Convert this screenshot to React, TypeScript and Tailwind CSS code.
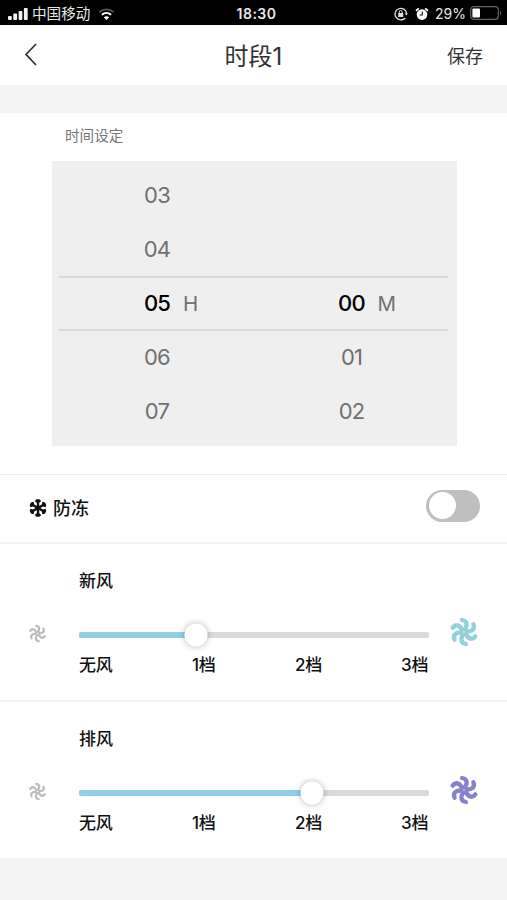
import React from "react";
import clsx from "clsx";

type FanProps = {
  className: string;
  thin?: boolean;
};

const BLADES = [0, 60, 120, 180, 240, 300];

function Fan({ className, thin }: FanProps) {
  return (
    <svg
      viewBox="-14 -14 28 28"
      fill="none"
      stroke="currentColor"
      strokeWidth={thin ? 3.3 : 4}
      strokeLinecap="round"
      className={className}>
      {BLADES.map((angle) => (
        <path key={angle} d="M0.4 -2.6C2.8 -4.8 4.2 -10.4 -1.8 -11.2" transform={`rotate(${angle})`} />
      ))}
    </svg>
  );
}

function StatusBar() {
  return (
    <div className="grid h-[25px] grid-cols-3 items-center bg-black text-[14px] leading-[25px] text-[#e8e8e8]">
      <div className="flex items-center pt-[2px] pl-2">
        <svg width="20" height="12" viewBox="0 0 20 12" fill="#f2f2f2" className="-mt-px">
          <rect x="0" y="8" width="3.8" height="4" rx="1" />
          <rect x="5.3" y="5.5" width="3.8" height="6.5" rx="1" />
          <rect x="10.6" y="3" width="3.8" height="9" rx="1" />
          <rect x="15.9" y="0" width="3.8" height="12" rx="1" />
        </svg>
        <span className="ml-1 text-[14.6px]">中国移动</span>
        <svg width="17" height="12" viewBox="0 0 17 12" fill="none" className="-mt-px ml-[8px]">
          <path d="M1.2 4.2C5.4 0.4 11.6 0.4 15.8 4.2" stroke="#555" strokeWidth="1.8" />
          <path d="M3.9 6.8C6.6 4.4 10.4 4.4 13.1 6.8" stroke="#fff" strokeWidth="2" />
          <path d="M5.8 9.2C7.4 7.8 9.6 7.8 11.2 9.2L8.5 12Z" fill="#fff" />
        </svg>
      </div>
      <div className="pl-[6px] text-center text-[14px] font-semibold tracking-[0.5px]">18:30</div>
      <div className="flex items-center justify-end pr-[5px]">
        {/* rotation lock */}
        <svg width="14" height="14" viewBox="0 0 14 14" fill="none" stroke="#ddd" strokeWidth="1.3">
          <path d="M11.2 11A5.8 5.8 0 1 1 12.6 6.4" />
          <path d="M10.6 6.2H14L12.4 8.6Z" fill="#ddd" stroke="none" />
          <rect x="4.2" y="6" width="5" height="4" fill="#ddd" stroke="none" />
          <path d="M5.2 6.4V5a1.5 1.5 0 0 1 3 0v1.4" strokeWidth="1" />
        </svg>
        {/* alarm */}
        <svg width="14" height="14" viewBox="0 0 14 14" className="ml-[7px]" fill="none">
          <circle cx="7" cy="7.6" r="5.3" fill="#fff" />
          <path d="M1 3.8L3.8 1.4M13 3.8L10.2 1.4" stroke="#fff" strokeWidth="1.8" />
          <path d="M7.3 4.4V8H4.6" stroke="#111" strokeWidth="1.1" />
        </svg>
        <span className="ml-[6px]">29%</span>
        <svg width="32" height="14" viewBox="0 0 32 14" className="-mt-px ml-1">
          <rect x="0.7" y="0.7" width="27.6" height="12.6" rx="3" fill="none" stroke="#666" strokeWidth="1.2" />
          <rect x="2.4" y="2.4" width="7.6" height="9.2" rx="1" fill="#fff" />
          <path d="M30 4.7C31.6 5.4 31.6 8.6 30 9.3Z" fill="#666" />
        </svg>
      </div>
    </div>
  );
}

type WheelProps = {
  values: string[];
  unit: string;
  className: string;
};

function Wheel({ values, unit, className }: WheelProps) {
  return (
    <div className={clsx("flex flex-col text-[22px] text-[#707070]", className)}>
      {values.map((value, i) => (
        <div key={i} className="flex h-[54px] items-center">
          <span className={clsx("w-[30px] text-center tracking-[-0.8px]", i === 2 && "font-medium text-black")}>
            {value}
          </span>
          {i === 2 && <span className="ml-[11px] pt-[3px] text-[20.5px]">{unit}</span>}
        </div>
      ))}
    </div>
  );
}

type SpeedProps = {
  title: string;
  level: number;
  fanColor: string;
};

function SpeedSlider({ title, level, fanColor }: SpeedProps) {
  const percent = (level / 3) * 100;
  return (
    <section className="h-[158px] border-t-2 border-[#f3f3f3] pt-6 text-[17px] font-medium text-[#111]">
      <h2 className="ml-[79px] h-[26px] leading-[26px]">{title}</h2>
      <div className="mt-[25px] flex h-8 items-center">
        <Fan className="mb-[3px] ml-[28px] size-[19px] text-[#bdbdbd]" thin />
        <div className="relative ml-8 h-[6px] w-[350px] rounded-[2px] bg-[#dadada]">
          <div className="h-full rounded-l-[2px] bg-[#8fd0e6]" style={{ width: `${percent}%` }} />
          <div
            className="absolute top-1/2 size-[23px] -translate-1/2 rounded-full bg-white shadow-[0_0_6px_rgba(0,0,0,0.3)]"
            style={{ left: `${percent}%` }}
          />
        </div>
        <Fan className={clsx("mb-[7px] ml-[20px] size-[30px]", fanColor)} />
      </div>
      <div className="ml-[79px] grid h-[28px] w-[350px] grid-cols-[113px_103px_106px_28px] leading-[28px] tracking-[-0.2px] whitespace-nowrap">
        <span>无风</span>
        <span>1档</span>
        <span>2档</span>
        <span>3档</span>
      </div>
    </section>
  );
}

export default function App() {
  return (
    <div className="h-[900px] w-[507px] overflow-hidden bg-[#f4f4f4] font-['Inter','Noto_Sans_CJK_SC',sans-serif]">
      <StatusBar />
      <header className="flex h-[60px] items-center justify-between bg-white px-[24px] text-[#333]">
        <svg width="50" height="24" viewBox="0 0 50 24" fill="none" stroke="#333" strokeWidth="1.7" className="mb-[3px]">
          <path d="M12 2L2 12.4L12 23" />
        </svg>
        <h1 className="pt-[3px] text-[24px]">时段1</h1>
        <button className="w-[50px] pt-[2px] text-right text-[18px]">保存</button>
      </header>

      <main className="mt-[28px] bg-white">
        <section className="h-[361px] pt-[11px]">
          <h2 className="ml-[65px] h-[24px] text-[14.6px] leading-[24px] text-[#777]">时间设定</h2>
          <div className="mt-[13px] ml-[52px] h-[285px] w-[405px] bg-[#efefef] px-[7px] pt-[7px]">
            <div className="grid grid-cols-2 bg-[linear-gradient(#d9d9d9,#d9d9d9),linear-gradient(#d9d9d9,#d9d9d9)] bg-[length:389px_2px] bg-[position:0_108px,0_161px] bg-no-repeat">
              <Wheel values={["03", "04", "05", "06", "07"]} unit="H" className="pl-[83px]" />
              <Wheel values={["", "", "00", "01", "02"]} unit="M" className="pl-[82px]" />
            </div>
          </div>
        </section>

        <section className="flex h-[68px] items-center border-t border-[#ececec] pr-[27px] pl-[29px]">
          <svg width="18" height="18" viewBox="-9 -9 18 18" stroke="#111" fill="none" strokeWidth="2.4" className="mb-px">
            {BLADES.map((angle) => (
              <path key={angle} d="M0 0V-8.8M-2.4 -7.8L0 -5.6L2.4 -7.8" transform={`rotate(${angle})`} />
            ))}
          </svg>
          <span className="ml-[6px] text-[18px] font-medium text-[#111]">防冻</span>
          <div className="mb-[6px] ml-auto flex h-[32px] w-[54px] items-center rounded-full bg-[#bfbfbf] pl-[3px]">
            <div className="size-[27px] rounded-full bg-white" />
          </div>
        </section>

        <SpeedSlider title="新风" level={1} fanColor="text-[#8fd3d8]" />
        <SpeedSlider title="排风" level={2} fanColor="text-[#8980cf]" />
      </main>
    </div>
  );
}
